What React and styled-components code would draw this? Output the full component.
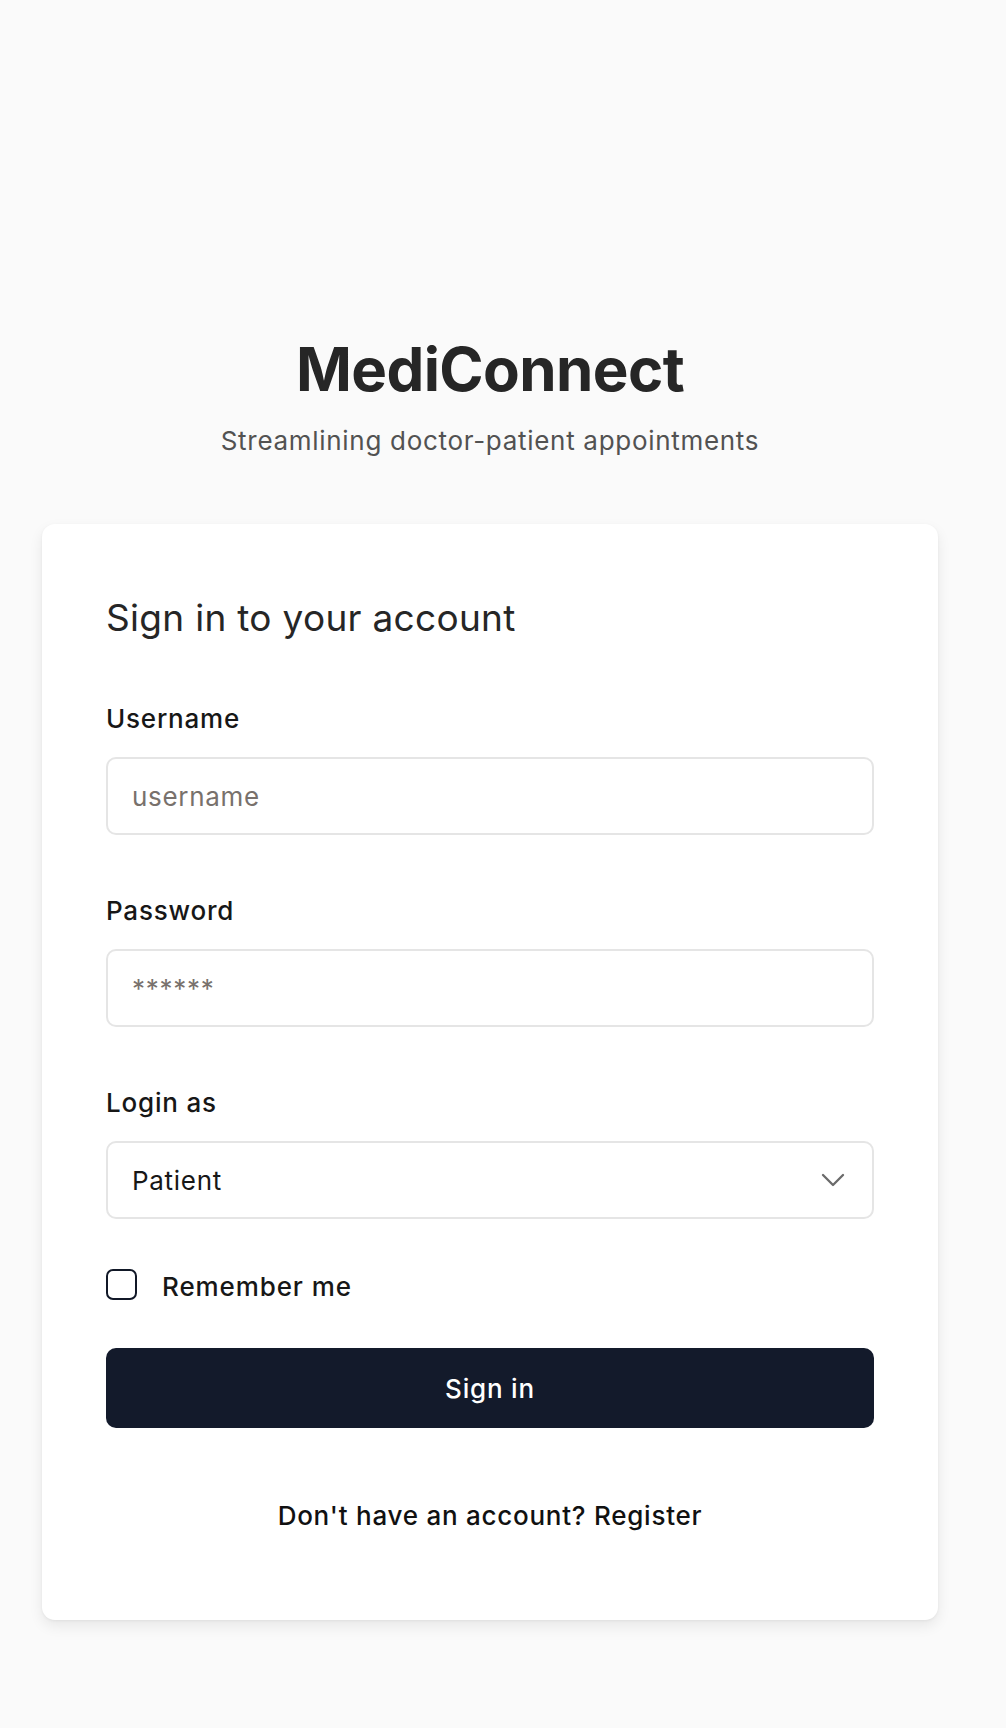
import styled, { createGlobalStyle } from "styled-components";
import { ChevronDown } from "lucide-react";

const GlobalStyle = createGlobalStyle`
  * {
    box-sizing: border-box;
  }
  body {
    margin: 0;
    background-color: #fafafa;
    font-family: Inter, "Noto Sans", "Liberation Sans", sans-serif;
    color: #171717;
  }
`;

const Page = styled.main`
  display: flex;
  flex-direction: column;
  align-items: center;
  min-height: 100vh;
  padding: 339px 26px 108px 0;
`;

const Brand = styled.header`
  display: flex;
  flex-direction: column;
  align-items: center;
  text-align: center;
`;

const Title = styled.h1`
  margin: 0;
  font-size: 60px;
  line-height: 60px;
  font-weight: 700;
  letter-spacing: -0.6px;
  color: #262626;
`;

const Tagline = styled.p`
  margin: 26px 0 0;
  font-size: 26px;
  line-height: 32px;
  letter-spacing: 0.7px;
  color: #525252;
`;

const Card = styled.section`
  width: 100%;
  max-width: 896px;
  margin-top: 67px;
  padding: 74px 64px 88px;
  background-color: white;
  border-radius: 13px;
  box-shadow: rgba(0, 0, 0, 0.05) 0px 1px 3px 0px,
    rgba(0, 0, 0, 0.08) 0px 6px 14px 0px;
`;

const CardTitle = styled.h2`
  margin: 0 0 63px;
  font-size: 37px;
  line-height: 40px;
  font-weight: 400;
  letter-spacing: 0.3px;
  color: #262626;
`;

const Form = styled.form`
  display: flex;
  flex-direction: column;
`;

const Field = styled.div`
  display: flex;
  flex-direction: column;
  gap: 22px;
  margin-bottom: ${({ $last }) => ($last ? "49px" : "58px")};
`;

const Label = styled.label`
  padding-top: 2px;
  font-size: 26px;
  line-height: 32px;
  font-weight: 500;
  letter-spacing: 0.8px;
  color: #171717;
`;

const Input = styled.input`
  width: 100%;
  height: 78px;
  padding: 0 24px;
  font-family: inherit;
  font-size: 26px;
  letter-spacing: 0.7px;
  color: #171717;
  background: white;
  border: 2px solid #e5e5e5;
  border-radius: 10px;
  outline: none;
  &::placeholder {
    color: #78716c;
  }
`;

const SelectWrap = styled.div`
  position: relative;
`;

const Select = styled.select`
  width: 100%;
  height: 78px;
  padding: 0 64px 0 24px;
  font-family: inherit;
  font-size: 26px;
  letter-spacing: 0.7px;
  color: #171717;
  background: white;
  border: 2px solid #e5e5e5;
  border-radius: 10px;
  appearance: none;
  outline: none;
`;

const SelectIcon = styled(ChevronDown)`
  position: absolute;
  right: 21px;
  top: 50%;
  transform: translateY(-50%);
  color: #6b6b6b;
  pointer-events: none;
`;

const CheckRow = styled.label`
  display: flex;
  align-items: flex-start;
  gap: 25px;
  margin-bottom: 40px;
`;

const Checkbox = styled.span`
  flex-shrink: 0;
  width: 31px;
  height: 31px;
  margin-top: 1px;
  border: 2.5px solid #111827;
  border-radius: 7px;
  background: white;
`;

const CheckText = styled.span`
  font-size: 26px;
  line-height: 37px;
  font-weight: 500;
  letter-spacing: 0.9px;
  color: #171717;
`;

const Button = styled.button`
  width: 100%;
  height: 80px;
  margin-top: 3px;
  border: none;
  border-radius: 10px;
  background-color: #131a2b;
  color: white;
  font-family: inherit;
  font-size: 26px;
  font-weight: 500;
  letter-spacing: 0.8px;
`;

const Footnote = styled.p`
  margin: 72px 0 0;
  text-align: center;
  font-size: 26px;
  line-height: 32px;
  font-weight: 500;
  letter-spacing: 0.75px;
  color: #111111;
`;

function App() {
  return (
    <>
      <GlobalStyle />
      <Page>
        <Brand>
          <Title>MediConnect</Title>
          <Tagline>Streamlining doctor-patient appointments</Tagline>
        </Brand>
        <Card>
          <CardTitle>Sign in to your account</CardTitle>
          <Form onSubmit={(e) => e.preventDefault()}>
            <Field>
              <Label htmlFor="username">Username</Label>
              <Input id="username" placeholder="username" />
            </Field>
            <Field>
              <Label htmlFor="password">Password</Label>
              <Input id="password" type="password" placeholder="******" />
            </Field>
            <Field $last>
              <Label htmlFor="role">Login as</Label>
              <SelectWrap>
                <Select id="role" defaultValue="patient">
                  <option value="patient">Patient</option>
                  <option value="doctor">Doctor</option>
                </Select>
                <SelectIcon size={40} strokeWidth={1.4} />
              </SelectWrap>
            </Field>
            <CheckRow>
              <Checkbox />
              <CheckText>Remember me</CheckText>
            </CheckRow>
            <Button type="submit">Sign in</Button>
          </Form>
          <Footnote>Don't have an account? Register</Footnote>
        </Card>
      </Page>
    </>
  );
}

export default App;
